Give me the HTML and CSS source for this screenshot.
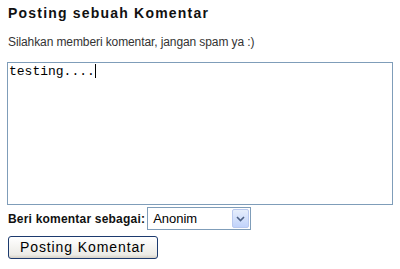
FILE: index.html
```html
<!DOCTYPE html>
<html lang="id">
<head>
    <meta charset="UTF-8">
    <title>Posting sebuah Komentar</title>
    <link rel="stylesheet" href="styles.css">
</head>
<body>
    <div class="comment-form">
        <h4 class="form-title">Posting sebuah Komentar</h4>
        <p class="form-note">Silahkan memberi komentar, jangan spam ya :)</p>

        <div class="comment-box">testing....<span class="caret"></span></div>

        <div class="identity">
            <label class="identity-label">Beri komentar sebagai:</label>
            <div class="select-box">
                <span class="select-value">Anonim</span>
                <span class="select-arrow">
                    <svg width="9" height="6" viewBox="0 0 9 6"><path d="M1 1 L4.5 4.5 L8 1" fill="none" stroke="#4d6185" stroke-width="1.6"/></svg>
                </span>
            </div>
        </div>

        <div class="actions">
            <button class="post-btn">Posting Komentar</button>
        </div>
    </div>
</body>
</html>
```

FILE: styles.css
```css
body {
    margin: 0;
    background-color: #fff;
    font-family: 'Liberation Sans', Arial, sans-serif;
    color: #000;
}

.comment-form {
    padding: 5px 7px 0 7px;
}

.form-title {
    margin: 0 0 0 1px;
    font-size: 14px;
    font-weight: bold;
    letter-spacing: 1.2px;
    line-height: 16px;
    color: #111;
}

.form-note {
    margin: 14px 0 0 1px;
    font-size: 12px;
    letter-spacing: -0.1px;
    line-height: 14px;
    color: #333;
}

.comment-box {
    margin-top: 13px;
    width: 382px;
    height: 139px;
    border: 1px solid #7f9db9;
    box-sizing: content-box;
    padding: 1px;
    font-family: 'Liberation Mono', 'Courier New', monospace;
    font-size: 13px;
    line-height: 15px;
    color: #000;
}

.caret {
    display: inline-block;
    width: 1px;
    height: 14px;
    background-color: #000;
    vertical-align: -3px;
}

.identity {
    display: flex;
    align-items: center;
    margin-top: 2px;
    gap: 2px;
}

.identity-label {
    margin-left: 1px;
    font-size: 12px;
    font-weight: bold;
    letter-spacing: 0.2px;
    color: #111;
}

.select-box {
    display: flex;
    align-items: center;
    justify-content: space-between;
    width: 96px;
    height: 21px;
    border: 1px solid #7f9db9;
    padding: 0 1px 0 5px;
    font-size: 13px;
}

.select-arrow {
    display: flex;
    align-items: center;
    justify-content: center;
    width: 15px;
    height: 17px;
    border: 1px solid #b9c9ef;
    border-radius: 2px;
    background: linear-gradient(#e6eefc, #c1d3fb);
}

.actions {
    margin-top: 6px;
}

.post-btn {
    margin-left: 1px;
    padding: 2px 11px 3px 11px;
    font-family: 'Liberation Sans', Arial, sans-serif;
    font-size: 14px;
    letter-spacing: 0.9px;
    color: #000;
    border: 1px solid #1c3a6e;
    border-radius: 3px;
    background: linear-gradient(#ffffff, #ecebe6 85%, #d6d0c5);
}
```
